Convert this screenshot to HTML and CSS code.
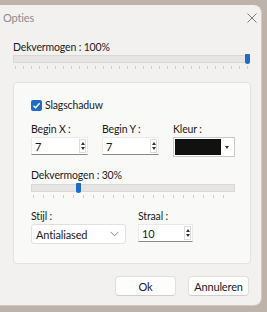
FILE: index.html
```html
<!DOCTYPE html>
<html>
<head>
    <title>Opties</title>
    <link rel="stylesheet" href="styles.css">
</head>
<body>
    <!-- the dialog window -->
    <div class="window">
        <div class="titlebar">
            <span class="title">Opties</span>
            <svg class="close" width="10" height="10" viewBox="0 0 10 10">
                <path d="M0.5 0.5 L9.5 9.5 M9.5 0.5 L0.5 9.5" stroke="#7a7a7a" stroke-width="1" fill="none"/>
            </svg>
        </div>

        <div class="content">
            <p class="label top-label">Dekvermogen : 100%</p>
            <div class="slider wide">
                <div class="track"></div>
                <div class="thumb" style="left: 232px"></div>
                <div class="ticks"></div>
            </div>

            <!-- shadow options -->
            <div class="group">
                <div class="check-row">
                    <span class="checkbox">
                        <svg width="9" height="9" viewBox="0 0 9 9">
                            <path d="M1.5 4.8 L3.6 6.8 L7.6 2.2" stroke="#fff" stroke-width="1.4" fill="none"/>
                        </svg>
                    </span>
                    <span class="label">Slagschaduw</span>
                </div>

                <div class="field-row">
                    <div class="field">
                        <p class="label">Begin X :</p>
                        <div class="spin w57">
                            <span>7</span>
                            <span class="arrows"><i class="up"></i><i class="down"></i></span>
                        </div>
                    </div>
                    <div class="field">
                        <p class="label">Begin Y :</p>
                        <div class="spin w57">
                            <span>7</span>
                            <span class="arrows"><i class="up"></i><i class="down"></i></span>
                        </div>
                    </div>
                    <div class="field">
                        <p class="label">Kleur :</p>
                        <div class="color">
                            <span class="swatch"></span>
                            <span class="drop"><i class="down"></i></span>
                        </div>
                    </div>
                </div>

                <p class="label slider-label">Dekvermogen : 30%</p>
                <div class="slider narrow">
                    <div class="track"></div>
                    <div class="thumb" style="left: 45px"></div>
                    <div class="ticks"></div>
                </div>

                <div class="field-row bottom">
                    <div class="field">
                        <p class="label">Stijl :</p>
                        <div class="combo">
                            <span>Antialiased</span>
                            <svg width="9" height="6" viewBox="0 0 9 6">
                                <path d="M0.5 0.8 L4.5 4.8 L8.5 0.8" stroke="#8a8a8a" stroke-width="1" fill="none"/>
                            </svg>
                        </div>
                    </div>
                    <div class="field">
                        <p class="label">Straal :</p>
                        <div class="spin w55">
                            <span>10</span>
                            <span class="arrows"><i class="up"></i><i class="down"></i></span>
                        </div>
                    </div>
                </div>
            </div>

            <div class="buttons">
                <span class="button">Ok</span>
                <span class="button">Annuleren</span>
            </div>
        </div>
    </div>
</body>
</html>
```

FILE: styles.css
```css
/* Desktop behind the dialog */
body {
    margin: 0;
    padding-top: 5px;
    background: #bdb3ab;
    font-family: Lato, "Noto Sans", sans-serif;
    font-size: 10.5px;
    letter-spacing: -0.15px;
    color: #1b1b1b;
}

/* The window itself */
.window {
    width: 262px;
    height: 301px;
    box-sizing: border-box;
    background: #f2f1f0;
    border-right: 1px solid #cfcac6;
    border-bottom: 1px solid #cfcac6;
    border-radius: 0 8px 8px 0;
}

.titlebar {
    height: 25px;
    display: flex;
    align-items: center;
    justify-content: space-between;
    padding: 0 4px 0 3px;
}

.title {
    font-size: 11px;
    color: #8c8c8c;
}

.content {
    padding: 0 11px 0 13px;
}

.label {
    margin: 0;
    line-height: 14px;
    white-space: nowrap;
}

.top-label {
    margin-top: 10px;
}

/* Sliders */
.slider {
    position: relative;
    height: 17px;
    margin-top: 1px;
}

.slider.wide {
    width: 237px;
}

.slider.narrow {
    width: 204px;
    margin-top: 2px;
}

.track {
    position: absolute;
    left: 0;
    right: 0;
    top: 0;
    height: 6px;
    background: #e6e5e4;
    border: 1px solid #dad8d6;
}

.thumb {
    position: absolute;
    top: -1px;
    width: 5px;
    height: 10px;
    background: #1c6bc9;
    border-radius: 1px 1px 3px 3px;
}

.ticks {
    position: absolute;
    left: 2px;
    right: 2px;
    top: 11px;
    height: 3px;
    background: repeating-linear-gradient(to right, #cfcdcb 0 1px, transparent 1px 8px);
}

.narrow .ticks {
    background: repeating-linear-gradient(to right, #cfcdcb 0 1px, transparent 1px 10px);
}

/* The group box */
.group {
    width: 238px;
    height: 182px;
    box-sizing: border-box;
    margin-top: 10px;
    padding: 15px 0 0 17px;
    background: #f9f9f8;
    border: 1px solid #e3e2e1;
    border-radius: 4px;
}

.check-row {
    display: flex;
    align-items: center;
    gap: 3px;
}

.checkbox {
    width: 11px;
    height: 11px;
    border-radius: 2px;
    background: #1f6cc4;
    display: flex;
    align-items: center;
    justify-content: center;
}

.field-row {
    display: flex;
    gap: 14px;
    margin-top: 10px;
}

.field-row.bottom {
    gap: 12px;
    margin-top: 8px;
}

.field .label {
    margin-bottom: 1px;
}

/* Spin boxes */
.spin {
    height: 18px;
    display: flex;
    align-items: center;
    justify-content: space-between;
    box-sizing: border-box;
    padding-left: 3px;
    background: #fff;
    border: 1px solid #ebeae9;
    border-bottom: 1px solid #8a8a8a;
    font-size: 11px;
}

.w57 {
    width: 57px;
}

.w55 {
    width: 55px;
}

.arrows {
    width: 7px;
    height: 14px;
    margin-right: 1px;
    display: flex;
    flex-direction: column;
    justify-content: space-between;
    align-items: center;
    border: 1px solid #dcdcdc;
    box-sizing: border-box;
    padding: 2px 0;
}

.up,
.down {
    display: block;
    width: 0;
    height: 0;
    border-left: 2px solid transparent;
    border-right: 2px solid transparent;
}

.up {
    border-bottom: 3px solid #333;
}

.down {
    border-top: 3px solid #333;
}

/* Colour picker */
.color {
    width: 62px;
    height: 20px;
    box-sizing: border-box;
    display: flex;
    align-items: center;
    padding: 1px;
    background: #fff;
    border: 1px solid #c9c8c7;
}

.swatch {
    width: 46px;
    height: 16px;
    background: #111;
}

.drop {
    flex: 1;
    display: flex;
    justify-content: center;
}

/* Drop down list */
.combo {
    width: 95px;
    height: 20px;
    box-sizing: border-box;
    display: flex;
    align-items: center;
    justify-content: space-between;
    padding: 0 6px 0 4px;
    background: #fff;
    border: 1px solid #e2e1e0;
    border-radius: 3px;
    font-size: 11px;
}

.slider-label {
    margin-top: 11px;
}

/* Ok / Annuleren */
.buttons {
    display: flex;
    justify-content: flex-end;
    gap: 12px;
    margin-top: 12px;
    padding-right: 1px;
}

.button {
    width: 61px;
    height: 20px;
    box-sizing: border-box;
    display: flex;
    align-items: center;
    justify-content: center;
    background: #fdfdfd;
    border: 1px solid #e0dfde;
    border-bottom-color: #cfcecd;
    border-radius: 4px;
    font-size: 11px;
}
```
